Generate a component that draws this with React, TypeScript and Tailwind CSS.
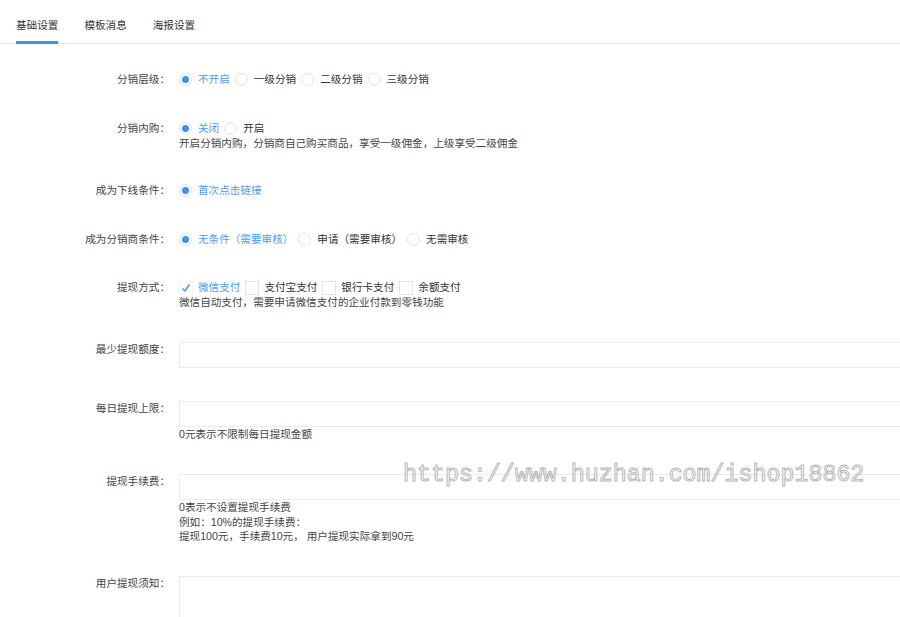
import React from "react";

const font = { fontFamily: '"Liberation Sans", "Noto Sans CJK SC", sans-serif' };

function Radio({ checked, label }: { checked?: boolean; label: string }) {
  return (
    <span className="inline-flex items-center mr-[5px]">
      <span className="w-[13px] h-[13px] rounded-full border border-[#e2e2e2] bg-white flex items-center justify-center">
        {checked && <span className="w-[7px] h-[7px] rounded-full bg-[#3c92f5]" />}
      </span>
      <span className={"ml-[6px] " + (checked ? "text-[#4b9cf7]" : "text-[#333]")}>{label}</span>
    </span>
  );
}

function Check({ checked, label }: { checked?: boolean; label: string }) {
  return (
    <span className="inline-flex items-center mr-[5px]">
      <span className={"w-[14px] h-[14px] flex items-center justify-center bg-white " + (checked ? "border border-[#f4f4f4]" : "border border-[#e2e2e2]")}>
        {checked && (
          <svg width="10" height="10" viewBox="0 0 10 10">
            <path d="M1.5 5.5 L4 8 L8.5 1.5" fill="none" stroke="#3c92f5" strokeWidth="1.4" />
          </svg>
        )}
      </span>
      <span className={"ml-[5px] " + (checked ? "text-[#4b9cf7]" : "text-[#333]")}>{label}</span>
    </span>
  );
}

function Row({ label, children, className = "" }: { label: string; children: React.ReactNode; className?: string }) {
  return (
    <div className={"flex items-start " + className}>
      <div className="w-[170px] shrink-0 text-right text-[#444] leading-[15px]">{label}</div>
      <div className="ml-[9px] flex-1 min-w-0">{children}</div>
    </div>
  );
}

function Input({ h = 26 }: { h?: number }) {
  return <div className="w-[760px] border border-[#ebebeb] bg-white" style={{ height: h }} />;
}

export default function App() {
  return (
    <div className="relative w-[900px] h-[617px] overflow-hidden bg-white text-[10.6px]" style={font}>
      <div className="flex h-[44px] border-b border-[#e8e8e8] pl-[16px]">
        {["基础设置", "模板消息", "海报设置"].map((t, i) => (
          <div key={t} className={"relative h-full flex items-center text-[#333] " + (i < 2 ? "mr-[26px]" : "")}>
            <span className="leading-[15px] mt-[7px]">{t}</span>
            {i === 0 && <span className="absolute left-0 right-0 bottom-[-1px] h-[3px] bg-[#3c92f5]" />}
          </div>
        ))}
      </div>

      <div className="flex flex-col pt-[28px]">
        <Row label="分销层级：">
          <div className="flex items-center leading-[15px]">
            <Radio checked label="不开启" />
            <Radio label="一级分销" />
            <Radio label="二级分销" />
            <Radio label="三级分销" />
          </div>
        </Row>

        <Row label="分销内购：" className="mt-[34px]">
          <div className="flex items-center leading-[15px]">
            <Radio checked label="关闭" />
            <Radio label="开启" />
          </div>
          <div className="text-[#444] leading-[15px]">开启分销内购，分销商自己购买商品，享受一级佣金，上级享受二级佣金</div>
        </Row>

        <Row label="成为下线条件：" className="mt-[32px]">
          <div className="flex items-center leading-[15px]">
            <Radio checked label="首次点击链接" />
          </div>
        </Row>

        <Row label="成为分销商条件：" className="mt-[34px]">
          <div className="flex items-center leading-[15px]">
            <Radio checked label="无条件（需要审核）" />
            <Radio label="申请（需要审核）" />
            <Radio label="无需审核" />
          </div>
        </Row>

        <Row label="提现方式：" className="mt-[33px]">
          <div className="flex items-center leading-[15px]">
            <Check checked label="微信支付" />
            <Check label="支付宝支付" />
            <Check label="银行卡支付" />
            <Check label="余额支付" />
          </div>
          <div className="text-[#444] leading-[15px]">微信自动支付，需要申请微信支付的企业付款到零钱功能</div>
        </Row>

        <Row label="最少提现额度：" className="mt-[32px]">
          <Input />
        </Row>

        <Row label="每日提现上限：" className="mt-[33px]">
          <Input />
          <div className="text-[#444] leading-[15px]">0元表示不限制每日提现金额</div>
        </Row>

        <Row label="提现手续费：" className="mt-[32px]">
          <Input />
          <div className="text-[#444] leading-[14.5px]">
            <div>0表示不设置提现手续费</div>
            <div>例如：10%的提现手续费：</div>
            <div>提现100元，手续费10元， 用户提现实际拿到90元</div>
          </div>
        </Row>

        <Row label="用户提现须知：" className="mt-[32px]">
          <Input h={100} />
        </Row>
      </div>

      <div
        className="absolute left-[403px] top-[461px] text-[23.3px] leading-[28px] whitespace-nowrap pointer-events-none"
        style={{ fontFamily: '"Liberation Mono", monospace', color: "rgba(255,255,255,0.7)", WebkitTextStroke: "1px #b8b8b8" }}
      >
        https://www.huzhan.com/ishop18862
      </div>
    </div>
  );
}
